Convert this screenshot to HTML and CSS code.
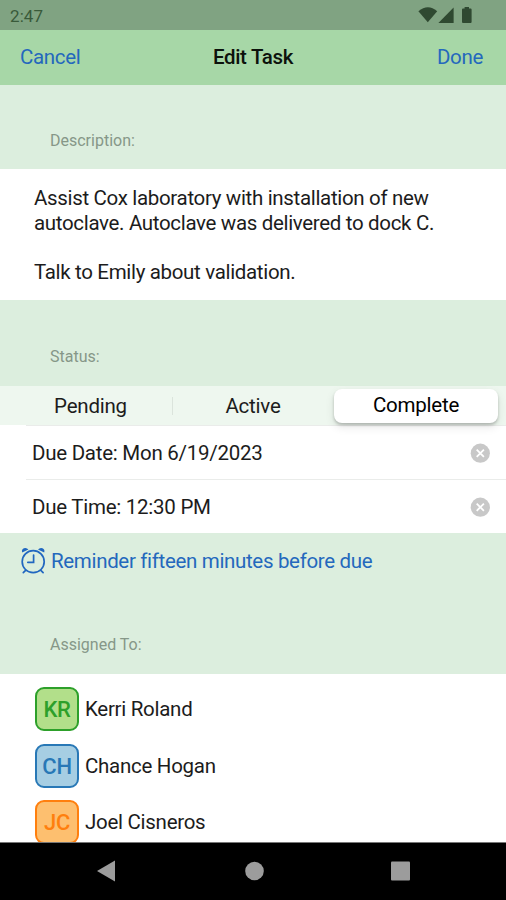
FILE: index.html
```html
<!DOCTYPE html>
<html lang="en">

<head>
  <meta charset="UTF-8">
  <meta name="viewport" content="width=device-width, initial-scale=1.0">
  <title>Edit Task</title>
  <link rel="stylesheet" href="styles.css">
</head>

<body>
  <div class="screen">
    <!-- status bar -->
    <div class="statusbar">
      <span class="clock">2:47</span>
      <svg class="signals" width="56" height="18" viewBox="0 0 56 18">
        <path d="M-.6 4.3Q9 -3.8 18.2 4.3L8.8 15.2Z" />
        <path d="M34.6 .5V16H19.4Z" />
        <path d="M43 2.5Q43 1.6 44 1.6H45.6V0H50V1.6H51.6Q52.6 1.6 52.6 2.5V15Q52.6 16 51.6 16H44Q43 16 43 15Z" />
      </svg>
    </div>

    <!-- title bar -->
    <div class="navbar">
      <a class="link">Cancel</a>
      <h1>Edit Task</h1>
      <a class="link done">Done</a>
    </div>

    <!-- form -->
    <div class="content">
      <h2 class="label">Description:</h2>
      <div class="description">
        <p>Assist Cox laboratory with installation of new<br>autoclave. Autoclave was delivered to dock C.</p>
        <p>Talk to Emily about validation.</p>
      </div>

      <h2 class="label status">Status:</h2>
      <div class="segment">
        <div class="option">Pending</div>
        <div class="option divided">Active</div>
        <div class="option selected">Complete</div>
      </div>
      <div class="due">
        <div class="row">
          <span class="date">Due Date: Mon 6/19/2023</span>
          <svg class="clear" width="20" height="20" viewBox="0 0 20 20">
            <circle cx="10.3" cy="10.2" r="9.6" />
            <path d="M6.7 6.6L13.9 13.8M13.9 6.6L6.7 13.8" />
          </svg>
        </div>
        <div class="row">
          <span class="time">Due Time: 12:30 PM</span>
          <svg class="clear" width="20" height="20" viewBox="0 0 20 20">
            <circle cx="10.3" cy="10.2" r="9.6" />
            <path d="M6.7 6.6L13.9 13.8M13.9 6.6L6.7 13.8" />
          </svg>
        </div>
      </div>

      <div class="reminder">
        <svg class="alarm" width="26" height="28" viewBox="0 0 26 28">
          <circle cx="12.2" cy="14.7" r="11" />
          <path d="M12.6 8V15.3H6.8M4.6 23.4L2.3 25.7M19.8 23.4L22.1 25.7" />
          <path class="bell" d="M1.2 5.6Q.2 2.4 2.9 1.3Q5.6 .4 7.4 2.6ZM23.2 5.6Q24.2 2.4 21.5 1.3Q18.8 .4 17 2.6Z" />
        </svg>
        <span class="reminder-text">Reminder fifteen minutes before due</span>
      </div>

      <h2 class="label assigned">Assigned To:</h2>
      <div class="people">
        <div class="person">
          <div class="avatar green">KR</div>
          <span class="name">Kerri Roland</span>
        </div>
        <div class="person">
          <div class="avatar blue">CH</div>
          <span class="name">Chance Hogan</span>
        </div>
        <div class="person">
          <div class="avatar orange">JC</div>
          <span class="name">Joel Cisneros</span>
        </div>
      </div>
    </div>

    <!-- system buttons -->
    <div class="buttons">
      <svg width="20" height="22" viewBox="0 0 20 22"><path d="M0 11L18 .5V21.5Z" /></svg>
      <svg width="20" height="20" viewBox="0 0 20 20"><circle cx="10.5" cy="10" r="9.3" /></svg>
      <svg width="20" height="20" viewBox="0 0 20 20"><rect x="1" y=".5" width="19" height="19" rx="1" /></svg>
    </div>
  </div>
</body>

</html>
```
FILE: styles.css
```css
body {
  margin: 0;
  font-family: Roboto, "Liberation Sans", sans-serif;
  font-size: 20.5px;
  letter-spacing: -0.33px;
  color: #1c1c1c;
}

h1,
h2,
p {
  margin: 0;
}

.screen {
  display: flex;
  flex-direction: column;
  width: 506px;
  height: 900px;
  overflow: hidden;
  background-color: #dceede;
}

.statusbar {
  display: flex;
  flex: none;
  justify-content: space-between;
  box-sizing: border-box;
  height: 30px;
  padding: 7px 31px 0 10px;
  background-color: #80a382;
}

.clock {
  font-size: 17px;
  line-height: 18px;
  letter-spacing: 0.1px;
  color: #395a3a;
}

.signals {
  overflow: visible;
  fill: #2f4931;
}

.navbar {
  display: grid;
  flex: none;
  grid-template-columns: 1fr auto 1fr;
  align-items: center;
  box-sizing: border-box;
  height: 55px;
  padding: 0 23px 1px 20px;
  background-color: #a7d7a7;
}

.navbar h1 {
  padding-left: 3px;
  font-size: 20.5px;
  font-weight: 500;
  color: #0c120c;
}

.link {
  color: #2468bd;
}

.done {
  text-align: right;
}

.content {
  flex: 1;
  min-height: 0;
  overflow: hidden;
}

.label {
  box-sizing: border-box;
  height: 84px;
  padding: 46px 50px 0;
  font-size: 16px;
  font-weight: 400;
  line-height: 20px;
  letter-spacing: 0;
  color: #869788;
}

.description {
  box-sizing: border-box;
  height: 131px;
  padding: 17px 34px 0;
  line-height: 24.5px;
  background-color: #fff;
}

.description p + p {
  margin-top: 24.5px;
}

.status {
  height: 86px;
  padding-top: 47px;
}

.segment {
  display: grid;
  grid-template-columns: 1fr 1fr 1fr;
  align-items: center;
  box-sizing: border-box;
  height: 39px;
  padding: 0 8px 0 9px;
  letter-spacing: -0.22px;
  background-color: #eef7ef;
}

.option {
  line-height: 18px;
  text-align: center;
}

.divided {
  margin-right: 2px;
  border-left: 1px solid #dbe4dc;
}

.selected {
  position: relative;
  height: 34px;
  margin-left: -1px;
  line-height: 33px;
  border-radius: 8px;
  background-color: #fff;
  box-shadow: 0 2px 3px rgba(0, 0, 0, 0.2), 0 4px 10px rgba(0, 0, 0, 0.1);
  color: #000;
}

.due {
  padding-left: 26px;
  letter-spacing: -0.26px;
  background-color: #fff;
}

.row {
  display: flex;
  align-items: center;
  justify-content: space-between;
  box-sizing: border-box;
  height: 54px;
  padding: 1px 16px 0 6px;
  border-top: 1px solid #eaecea;
}

.clear {
  fill: #c8c8c8;
  stroke: none;
}

.clear path {
  stroke: #fff;
  stroke-width: 1.8;
}

.reminder {
  display: flex;
  align-items: center;
  height: 56px;
  padding-left: 21px;
  gap: 4px;
  color: #2468bd;
}

.alarm {
  fill: none;
  stroke: #2167c0;
  stroke-width: 1.7;
  stroke-linecap: round;
}

.alarm .bell {
  fill: #2167c0;
  stroke: none;
}

.assigned {
  height: 85px;
  padding-top: 46px;
}

.people {
  display: flex;
  flex-direction: column;
  gap: 12.7px;
  padding: 13px 35px;
  background-color: #fff;
}

.person {
  display: flex;
  align-items: center;
  gap: 6px;
}

.name {
  letter-spacing: -0.28px;
}

.avatar {
  box-sizing: border-box;
  width: 44px;
  height: 44px;
  border: 2px solid;
  border-radius: 9px;
  font-size: 22px;
  font-weight: 500;
  line-height: 41px;
  text-align: center;
}

.green {
  color: #2da02a;
  background-color: #b2df8a;
}

.blue {
  color: #2878b6;
  background-color: #a6cee3;
}

.orange {
  color: #ff7f0e;
  background-color: #fdbf6f;
}

.buttons {
  display: flex;
  flex: none;
  align-items: center;
  justify-content: space-between;
  box-sizing: border-box;
  height: 58px;
  padding: 0 96px 1px 97px;
  border-top: 1px solid #777;
  background-color: #000;
  fill: #9c9c9c;
}
```
